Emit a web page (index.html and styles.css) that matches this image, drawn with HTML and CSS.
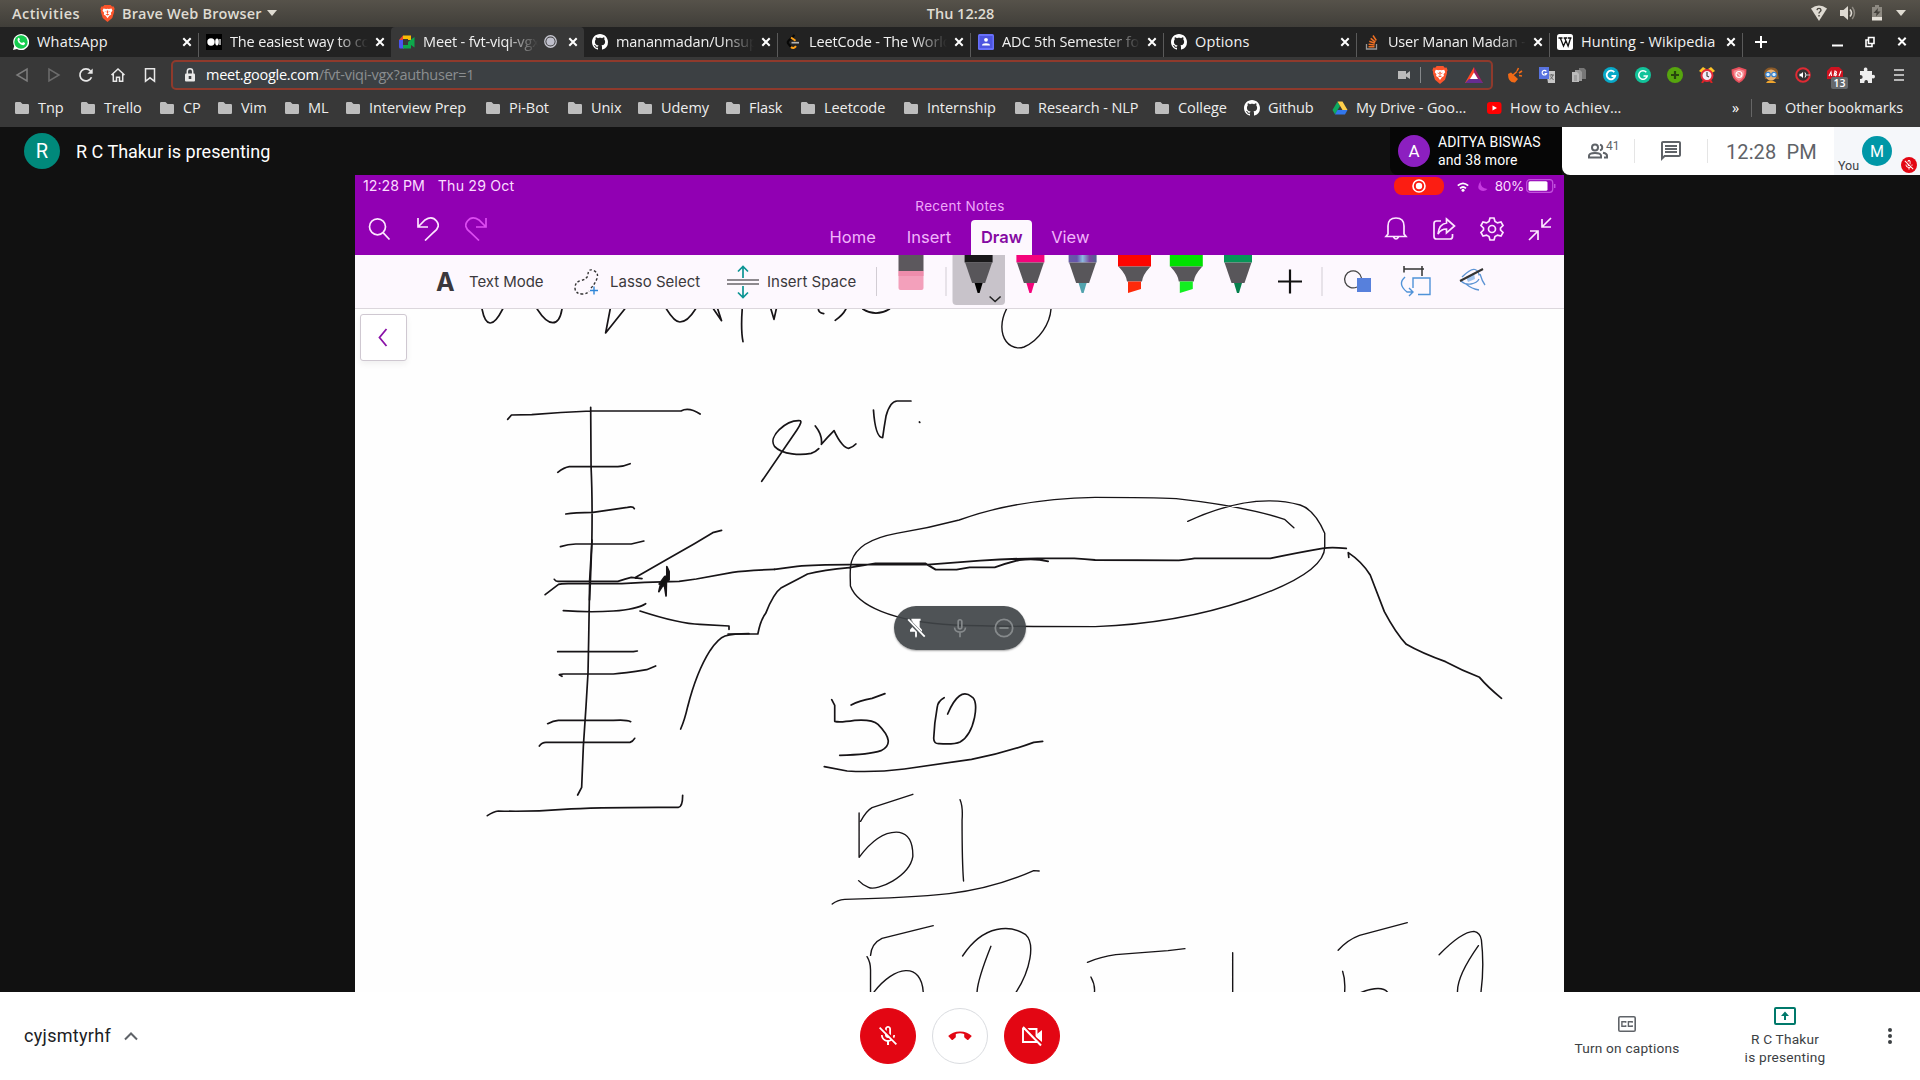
FILE: index.html
```html
<!DOCTYPE html>
<html lang="en">
<head>
<meta charset="utf-8">
<title>Meet - fvt-viqi-vgx</title>
<link rel="stylesheet" href="styles.css">
</head>
<body>
<svg class="defs" width="0" height="0">
  <symbol id="folder" viewBox="0 0 16 16"><path fill="#bdbdbd" d="M1 3.2Q1 2 2.200 2H6.500l2 2h5.300Q15 4 15 5.200v7.600Q15 14 13.800 14H2.200Q1 14 1 12.800z"/></symbol>
  <symbol id="github" viewBox="0 0 16 16"><path fill="#fff" d="M8 0C3.580 0 0 3.580 0 8c0 3.540 2.290 6.530 5.470 7.590.4.070.55-.17.55-.38 0-.19-.01-.82-.01-1.490-2.010.37-2.530-.49-2.690-.94-.09-.23-.48-.94-.82-1.130-.28-.15-.68-.52-.01-.53.63-.01 1.080.58 1.230.82.72 1.210 1.870.87 2.330.66.07-.52.28-.87.51-1.070-1.780-.2-3.640-.89-3.640-3.950 0-.87.31-1.590.82-2.150-.08-.2-.36-1.020.08-2.120 0 0 .67-.21 2.200.82.64-.18 1.320-.27 2-.27s1.360.09 2 .27c1.530-1.040 2.200-.82 2.200-.82.44 1.100.16 1.920.08 2.120.51.56.82 1.270.82 2.150 0 3.070-1.870 3.750-3.650 3.950.29.25.54.73.54 1.480 0 1.070-.01 1.930-.01 2.200 0 .21.15.46.55.38A8 8 0 0 0 16 8c0-4.420-3.580-8-8-8z"/></symbol>
  <symbol id="x" viewBox="0 0 10 10"><path d="M1.300 1.300l7.400 7.400M8.700 1.300L1.300 8.700" stroke="#fff" stroke-width="2" fill="none"/></symbol>
  <symbol id="brave" viewBox="0 0 16 19"><path fill="#fb542b" d="M4.500 0h7L13 1.800l2-.2 1 3-.8 1.700.3 1.200-2.200 7L8 19l-5.300-4.500-2.200-7 .3-1.200L0 4.600l1-3 2 .2z"/><path fill="#fff" d="M3.500 4l3 .6L8 4.200l1.500.4 3-.6 1 2.500-1.800 2.300.5 1.700-2.200 1.500L8 14.800 6 12 3.800 10.500l.5-1.700L2.500 6.500z"/><path fill="#fb542b" d="M4.600 7l2.400.5v1zM11.400 7L9 7.500v1zM7.200 6.200h1.600L8.500 9.500h-1zM5.700 10.500L8 9.900l2.300.6L8 11.800z"/></symbol>
  <symbol id="micoff" viewBox="0 0 24 24"><path fill="#fff" d="M19 11h-1.700c0 .74-.16 1.430-.43 2.050l1.230 1.230c.56-.98.9-2.090.9-3.280zm-4.020.17c0-.06.02-.11.02-.17V5c0-1.660-1.340-3-3-3S9 3.340 9 5v.18l1.800 1.800V5c0-.66.54-1.200 1.200-1.200s1.200.54 1.200 1.200v4.400l1.780 1.770zM4.270 3L3 4.270l6.010 6.010V11c0 1.660 1.330 3 2.990 3 .22 0 .44-.03.65-.08l1.660 1.660c-.71.33-1.500.52-2.310.52-2.760 0-5.300-2.100-5.300-5.100H5c0 3.410 2.720 6.230 6 6.720V21h2v-3.280c.91-.13 1.770-.45 2.540-.9L19.730 21 21 19.730 4.270 3z"/></symbol>
</svg>

<header class="gnome">
  <div class="g-left"><span>Activities</span><svg class="g-brave"><use href="#brave"/></svg><span class="g-app">Brave Web Browser</span><i class="caret"></i></div>
  <div class="g-clock">Thu 12:28</div>
  <div class="g-right">
    <svg width="16" height="16" viewBox="0 0 16 16"><path fill="#dedad2" d="M0 3.500Q8-2.500 16 3.500L8 16z"/><path d="M6 5.200q.2-1.800 2-1.800t2 1.600q0 1-1 1.700t-1 1.800M8 10v1.600" fill="none" stroke="#4a4740" stroke-width="1.400"/></svg>
    <svg width="16" height="16" viewBox="0 0 16 16"><path fill="#dedad2" d="M0 5h3.500L8 1v14l-4.500-4H0z"/><path d="M10 4.500q3 3.500 0 7" stroke="#dedad2" stroke-width="1.600" fill="none"/><path d="M12.200 2q4.500 6 0 12" stroke="#8b877f" stroke-width="1.500" fill="none"/></svg>
    <svg width="12" height="16" viewBox="0 0 12 16"><path fill="#8d8981" d="M1 2h3V0h4v2h3v10H1z"/><path fill="#e6e2da" d="M1 12h10v3.500H1z"/><path fill="#45423c" d="M7 3L2.500 8h3L5 11.500l4.500-5h-3z"/></svg>
    <i class="caret"></i>
  </div>
</header>

<nav class="tabs">
  <div class="tab"><svg class="fav" viewBox="0 0 16 16"><path fill="#fff" d="M0 16l1.200-4A8 8 0 1 1 4 14.900z"/><circle cx="8" cy="8" r="6.700" fill="#16cc4f"/><path fill="#fff" d="M5 4q1-.8 1.500.4l.4 1-.7 1q1 2 2.900 2.700l1-1 2 1q.3 1.600-1.700 2.100Q8 11.300 5.500 8.600 3.600 6 5 4z"/></svg><span>WhatsApp</span><svg class="cl"><use href="#x"/></svg></div>
  <div class="tab sep"><svg class="fav" viewBox="0 0 16 16"><rect width="16" height="16" fill="#000"/><circle cx="5" cy="8" r="3.700" fill="#fff"/><ellipse cx="11" cy="8" rx="1.800" ry="3.400" fill="#fff"/><rect x="13.400" y="5" width="1.200" height="6" fill="#fff"/></svg><span class="fade">The easiest way to code</span><svg class="cl"><use href="#x"/></svg></div>
  <div class="tab active"><svg class="fav" viewBox="0 0 16 16"><path fill="#ea4335" d="M0 6l4-4.500V6z"/><path fill="#fbbc04" d="M4 1.500h8V6H9V5H4z"/><path fill="#4a54f0" d="M0 6h4v5h1v3.500H1.200Q0 14.500 0 13z"/><path fill="#0da84b" d="M4 11h5V8l3-2.500L15.500 3v10.500L12 11v3.500H4z"/></svg><span class="fade">Meet - fvt-viqi-vgx</span><svg class="rec" viewBox="0 0 12 12"><circle cx="6" cy="6" r="5.300" fill="none" stroke="#c8c8d2" stroke-width="1.200"/><circle cx="6" cy="6" r="3.800" fill="#c0c0cc"/></svg><svg class="cl"><use href="#x"/></svg></div>
  <div class="tab"><svg class="fav"><use href="#github"/></svg><span class="fade">mananmadan/Unsupervised</span><svg class="cl"><use href="#x"/></svg></div>
  <div class="tab sep"><svg class="fav" viewBox="0 0 16 16"><path d="M9.500 1L3.500 6.700q-1.600 1.600 0 3.300L6 13" fill="none" stroke="#070706" stroke-width="2"/><path d="M6 3.500l2.500 1.800 2 1.500M6 13q2.500 2.400 5-.8" fill="none" stroke="#ffa116" stroke-width="2"/><path d="M6.500 8.700H14" stroke="#b3b3b3" stroke-width="1.700"/></svg><span class="fade">LeetCode - The World's</span><svg class="cl"><use href="#x"/></svg></div>
  <div class="tab sep"><svg class="fav" viewBox="0 0 16 16"><rect width="16" height="16" rx="1.500" fill="#6870fa"/><rect x="1.500" y="2" width="13" height="12" fill="#4d55e0"/><circle cx="8" cy="5.800" r="1.900" fill="#fff"/><path fill="#fff" d="M4 11.500q0-2.300 4-2.300t4 2.300z"/></svg><span class="fade">ADC 5th Semester for</span><svg class="cl"><use href="#x"/></svg></div>
  <div class="tab sep"><svg class="fav"><use href="#github"/></svg><span class="opt">Options</span><svg class="cl"><use href="#x"/></svg></div>
  <div class="tab sep"><svg class="fav" viewBox="0 0 16 16"><path d="M2.500 10v5h10v-5" fill="none" stroke="#999" stroke-width="1.300"/><path d="M4.500 12.800h6M4.600 10.200l6 .8M5.300 7.300l5.500 2M6.700 4.400l4.700 3.700M9 1.500l3.300 5" stroke="#ef7024" stroke-width="1.500"/></svg><span class="fade tight">User Manan Madan - Stack</span><svg class="cl"><use href="#x"/></svg></div>
  <div class="tab sep"><svg class="fav" viewBox="0 0 16 16"><rect width="16" height="16" rx="2.500" fill="#fff"/><path d="M1.500 4h4M6.700 4h3.600M11 4h3.500M3.300 4l3.200 8L9 6.500M7.700 4l3.400 8L13.600 4" fill="none" stroke="#111" stroke-width="1.300"/></svg><span class="wide">Hunting - Wikipedia</span><svg class="cl"><use href="#x"/></svg></div>
  <div class="newtab sep"><svg width="12" height="12" viewBox="0 0 12 12"><path d="M6 0v12M0 6h12" stroke="#fff" stroke-width="2"/></svg></div>
  <div class="win">
    <svg width="11" height="12" viewBox="0 0 11 12"><path d="M0 9.500h11" stroke="#fff" stroke-width="2"/></svg>
    <svg width="10" height="12" viewBox="0 0 10 12"><path d="M3.500 1.500h5.500v6H3.500zM3 4H1v6.500h6V8" fill="none" stroke="#fff" stroke-width="1.600"/></svg>
    <svg width="10" height="11"><use href="#x"/></svg>
  </div>
</nav>

<div class="toolbar">
  <div class="navs">
    <svg viewBox="0 0 18 18"><path d="M14 3v12L4 9z" fill="none" stroke="#7d7d7d" stroke-width="1.500"/></svg>
    <svg viewBox="0 0 18 18"><path d="M4 3v12l10-6z" fill="none" stroke="#6c6c6c" stroke-width="1.500"/></svg>
    <svg viewBox="0 0 18 18"><path d="M14.500 11.200A6 6 0 1 1 13.500 5" fill="none" stroke="#e8e8e8" stroke-width="1.700"/><path d="M15.700 2.500v5.300h-5.400z" fill="#e8e8e8"/></svg>
    <svg viewBox="0 0 18 18"><path d="M2.500 9L9 3l6.500 6M4.300 8v7.200h3.200v-4h3v4h3.200V8" fill="none" stroke="#e8e8e8" stroke-width="1.500"/></svg>
    <svg viewBox="0 0 18 18"><path d="M4.500 2.700h9v12.600L9 11.800l-4.500 3.500z" fill="none" stroke="#e8e8e8" stroke-width="1.500"/></svg>
  </div>
  <div class="url">
    <svg class="lock" width="12" height="14" viewBox="0 0 12 14"><rect x="1" y="5.500" width="10" height="8" rx="1" fill="#e8e8e8"/><path d="M3.300 6V3.500a2.700 2.700 0 0 1 5.400 0V6" fill="none" stroke="#e8e8e8" stroke-width="1.500"/><rect x="4.700" y="8" width="2.600" height="3" fill="#3c4043"/></svg>
    <span class="addr"><b>meet.google.com</b>/fvt-viqi-vgx?authuser=1</span>
    <svg class="cam" width="12" height="10" viewBox="0 0 12 10"><path fill="#bbb" d="M0 1h8v3l4-3v8L8 6.500V9H0z"/></svg>
    <i class="ubar"></i>
    <svg class="ubr" width="16" height="18"><use href="#brave"/></svg>
    <svg class="bat" width="18" height="16" viewBox="0 0 18 16"><path fill="#9e1f63" d="M9 0l9 16H9z"/><path fill="#ff4724" d="M9 0L0 16h9z"/><path fill="#662d91" d="M0 16l4-4h10l4 4z"/><path fill="#fff" d="M9 5.500L13 12H5z"/></svg>
  </div>
  <div class="exts">
    <svg viewBox="0 0 16 16"><path fill="#f26a16" d="M1 7l3-1.500L11 12l-3 3.500Q1 16 1 7z"/><path d="M6 8l4-3.500M11.500 1L10 4M15 4l-3 2M15 9l-3-.5" stroke="#f26a16" stroke-width="1.600"/></svg>
    <svg viewBox="0 0 16 16"><path fill="#c6c6c6" d="M7 4h9v12H9z"/><rect width="10" height="12" fill="#5873e0"/><path d="M7.300 4.300a2.300 2.300 0 1 0 .3 2.200H5.500" fill="none" stroke="#fff" stroke-width="1.200"/><path d="M10.500 8h4.500M12.700 7v1M14 8q-1 3-3 4.500M11.500 9.500l3 3.500" stroke="#666" fill="none"/></svg>
    <svg viewBox="0 0 16 16"><path fill="#777" d="M8 1h5l2 2v9H8z"/><path fill="#999" d="M4 3h5l2 2v9H4z"/><path fill="#bbb" d="M1 5h5l2 2v8H1z"/><path d="M3 9h3M3 11h3M3 13h3" stroke="#888"/></svg>
    <svg viewBox="0 0 16 16"><circle cx="8" cy="8" r="8" fill="#08a9c8"/><path d="M11.300 5.200A4.300 4.300 0 1 0 12.200 9H8.500" fill="none" stroke="#fff" stroke-width="1.800"/></svg>
    <svg viewBox="0 0 16 16"><circle cx="8" cy="8" r="8" fill="#12c39a"/><path d="M11.300 5.200A4.300 4.300 0 1 0 12.200 9H8.500" fill="none" stroke="#fff" stroke-width="1.500"/></svg>
    <svg viewBox="0 0 16 16"><circle cx="8" cy="8" r="8" fill="#56a50e"/><path d="M8 4v8M4 8h8" stroke="#27460d" stroke-width="2.200"/></svg>
    <svg viewBox="0 0 16 16"><path fill="#ffc526" d="M0 4L4 0l3 2-4 4zM16 4l-4-4-3 2 4 4z"/><path d="M3 16l2-3M13 16l-2-3" stroke="#d22" stroke-width="2"/><circle cx="8" cy="8.500" r="5.500" fill="#f4ecf7" stroke="#e32938" stroke-width="2"/><path d="M8 5v4l2 1" fill="none" stroke="#444" stroke-width="1.200"/></svg>
    <svg viewBox="0 0 16 16"><path fill="#e94f5c" d="M8 0l7.500 2.500Q16 12 8 16 0 12 .5 2.500z"/><path fill="#f58b92" d="M8 2l5.500 1.800Q14 11 8 14 2 11 2.500 3.800z"/><circle cx="8" cy="7.500" r="3" fill="none" stroke="#fff" stroke-width="1.200"/><path d="M6 5.500l4 4" stroke="#fff"/></svg>
    <svg viewBox="0 0 16 16"><path fill="#8a5a28" d="M1 6q1-6 8-5.500T15 7l1 5H2z"/><circle cx="8" cy="8" r="5.500" fill="#e8b274"/><circle cx="5" cy="7.500" r="2.300" fill="#d9f0ff" stroke="#2b7bd0" stroke-width="1.100"/><circle cx="11" cy="7.500" r="2.300" fill="#d9f0ff" stroke="#2b7bd0" stroke-width="1.100"/><path fill="#f0a52c" d="M3 16q1-3 5-2.500t5 2.500z"/></svg>
    <svg viewBox="0 0 16 16"><circle cx="8" cy="8" r="6.800" fill="#333" stroke="#df2a33" stroke-width="2"/><path fill="#fff" d="M4.500 6.800h1.500L8 5v6L6 9.300H4.500z"/><path d="M10 5.500q2 2.500 0 5" fill="none" stroke="#fff"/><path d="M11 8h4" stroke="#bbb"/></svg>
    <span class="adb"><svg viewBox="0 0 16 16"><path fill="#cf1220" d="M4 0h8l4 4v8H0V4z"/><path d="M2 9l2-4 .5 4M7 9l1-5q3 1 0 3 3 0 0 2M12 9l2-5" fill="none" stroke="#fff" stroke-width="1.100"/></svg><em>13</em></span>
    <svg viewBox="0 0 16 16"><path fill="#eee" d="M1 4h4q-.8-3.500 1.600-3.500T8.300 4H13v4q3-.8 3 1.600T13 11.300V16H9q.2-3-1.800-3T5.300 16H1v-4q2.700.2 2.700-1.900T1 8z"/></svg>
    <svg viewBox="0 0 16 16"><path d="M3 3h10M3 8h10M3 13h10" stroke="#e0e0e0" stroke-width="1.500"/></svg>
  </div>
</div>

<div class="bookmarks">
  <div><svg><use href="#folder"/></svg>Tnp</div><div><svg><use href="#folder"/></svg>Trello</div><div><svg><use href="#folder"/></svg>CP</div><div><svg><use href="#folder"/></svg>Vim</div><div><svg><use href="#folder"/></svg>ML</div><div><svg><use href="#folder"/></svg>Interview Prep</div><div><svg><use href="#folder"/></svg>Pi-Bot</div><div><svg><use href="#folder"/></svg>Unix</div><div><svg><use href="#folder"/></svg>Udemy</div><div><svg><use href="#folder"/></svg>Flask</div><div><svg><use href="#folder"/></svg>Leetcode</div><div><svg><use href="#folder"/></svg>Internship</div><div><svg><use href="#folder"/></svg>Research - NLP</div><div><svg><use href="#folder"/></svg>College</div><div><svg><use href="#github"/></svg>Github</div>
  <div><svg viewBox="0 0 16 16"><path fill="#0da960" d="M5.500 1.500L8 6l-5 8.500L.5 10z"/><path fill="#ffcf4a" d="M5.500 1.500h5l5 8.500h-5z"/><path fill="#3277ed" d="M5.500 10h10L13 14.500H3z"/></svg>My Drive - Goo…</div>
  <div class="yt"><svg viewBox="0 0 16 16"><rect x="1" y="2" width="14.500" height="12" rx="3" fill="#f00"/><path fill="#fff" d="M6.500 5.500L11 8l-4.500 2.500z"/></svg>How to Achiev…</div>
  <div class="more">»</div>
  <div class="other"><svg><use href="#folder"/></svg>Other bookmarks</div>
</div>

<main class="meet">
  <div class="meethead">
    <i class="av av-r">R</i><span class="who">R C Thakur is presenting</span>
    <div class="others"><i class="av av-a">A</i><p>ADITYA BISWAS<br>and 38 more</p></div>
    <div class="panel">
      <div class="people"><svg width="24" height="24" viewBox="0 0 24 24"><g fill="none" stroke="#5f6368" stroke-width="2"><circle cx="9" cy="8.500" r="3"/><path d="M3 18.500v-1.700q0-2.800 6-2.800t6 2.800v1.700z"/><path d="M14 5.600a3 3 0 0 1 0 5.800M17 13.800q4 .8 4 3v1.700h-3"/></g></svg><sup>41</sup></div>
      <div class="chat"><svg width="24" height="24" viewBox="0 0 24 24"><path fill="#5f6368" d="M4 4h16v12H5.170L4 17.170V4m0-2c-1.100 0-1.990.9-1.990 2L2 22l4-4h14c1.100 0 2-.9 2-2V4c0-1.100-.9-2-2-2H4zm2 10h12v2H6v-2zm0-3h12v2H6V9zm0-3h12v2H6V6z"/></svg></div>
      <div class="time">12:28&nbsp; PM</div>
      <div class="you"><span>You</span><i class="av av-m">M</i><i class="mute"><svg width="12" height="12"><use href="#micoff"/></svg></i></div>
    </div>
  </div>

  <section class="share">
    <div class="ipad">
      <div class="status"><span>12:28 PM</span><span class="date">Thu 29 Oct</span>
        <i class="recpill"><svg width="14" height="14" viewBox="0 0 14 14"><circle cx="7" cy="7" r="6" fill="none" stroke="#fff" stroke-width="1.600"/><circle cx="7" cy="7" r="3.200" fill="#fff"/></svg></i>
        <svg class="wifi" width="12" height="10" viewBox="0 0 12 10"><path d="M.8 3.700q5.200-4.700 10.400 0M3 6.300q3-2.700 6 0" fill="none" stroke="#fff" stroke-width="1.800"/><circle cx="6" cy="8.300" r="1.500" fill="#fff"/></svg>
        <svg class="moon" width="10" height="12" viewBox="0 0 10 12"><path fill="#c63be0" d="M3 .5Q1 7.500 9.500 9 6 12.500 2 10T3 .5z"/></svg>
        <span>80%</span>
        <svg class="batt" width="30" height="14" viewBox="0 0 30 14"><rect x=".7" y=".7" width="26" height="12.600" rx="3" fill="none" stroke="#c252dd" stroke-width="1.200"/><rect x="2.500" y="2.300" width="19" height="9.400" rx="1.500" fill="#fff"/><path d="M28.700 5v4" stroke="#c252dd" stroke-width="1.500"/></svg>
      </div>
      <div class="ribbon">
        <div class="r-left">
          <svg width="23" height="24" viewBox="0 0 23 24"><circle cx="9.500" cy="9.800" r="8" /><path d="M15.300 15.800l6.200 6.700"/></svg>
          <svg width="22" height="24" viewBox="0 0 22 24"><path d="M1 1v9h10M1 10L8 3Q15-1.500 19.500 4T17 15l-9 8.500"/></svg>
          <svg class="dim" width="22" height="24" viewBox="0 0 22 24"><path d="M21 1v9H11M21 10l-7-7Q7-1.500 2.500 4T5 15l9 8.500"/></svg>
        </div>
        <div class="r-mid"><div class="recent">Recent Notes</div><div class="rtabs"><span>Home</span><span>Insert</span><span class="on">Draw</span><span>View</span></div></div>
        <div class="r-right">
          <svg width="24" height="24" viewBox="0 0 24 24"><path d="M4 17V9q0-8 8-8t8 8v8l2 2.500H2zM9.500 20q2.500 4 5 0"/></svg>
          <svg width="24" height="24" viewBox="0 0 24 24"><path d="M9 4H4.500Q2 4 2 6.500v13Q2 22 4.500 22H18q2.500 0 2.500-2.500V17M14.500 2l8 7-8 7v-4Q9 12 6 17q1-10 8.500-11z"/></svg>
          <svg width="24" height="24" viewBox="0 0 24 24"><path d="M10 1h4l1 3.500 2.500 1.400 3.500-1 2 3.600-2.500 2.500v2L23 15.500l-2 3.600-3.500-1-2.500 1.400-1 3.500h-4l-1-3.500-2.500-1.400-3.500 1-2-3.600L3.500 13v-2L1 8.500l2-3.600 3.500 1L9 4.500z"/><circle cx="12" cy="12" r="3.500"/></svg>
          <svg width="24" height="24" viewBox="0 0 24 24"><path d="M23 1l-9 9M14 2v8h9M1 23l9-9M2 14h8v9"/></svg>
        </div>
      </div>
    </div>
    <div class="draw">
      <b class="bigA">A</b><span class="tm">Text Mode</span>
      <svg class="lasso" width="26" height="26" viewBox="0 0 26 26"><path d="M17 19q4-4 6-9.500T19.500 1.500 14 6Q13 10 7 11.500T1 19t8 6q5-.5 6-3" fill="none" stroke="#333" stroke-width="1.400" stroke-dasharray="2.500 2"/><path d="M20 17.500v8M16 21.500h8" stroke="#2f86d8" stroke-width="1.400"/></svg>
      <span class="ls">Lasso Select</span>
      <svg class="insp" width="34" height="34" viewBox="0 0 34 34"><path d="M1 15h32M1 19h32" stroke="#6a666b" stroke-width="1.700"/><path d="M17 13V2M12 6.500L17 1.500l5 5M17 21v11M12 27.500l5 5 5-5" fill="none" stroke="#0c9494" stroke-width="1.700"/></svg>
      <span class="is">Insert Space</span>
      <!-- drawing tools -->
      <svg class="pens" width="620" height="53" viewBox="872 255 620 53">
        <defs>
          <g id="nib"><path fill="#58565a" d="M-13.500 7.500h27L6.500 28h-13z"/></g>
          <g id="mark"><path fill="#58565a" d="M-16 11.500h32Q8 20 7.500 26.500h-15Q-8 20-16 11.500z"/></g>
          <linearGradient id="gal"><stop offset="0" stop-color="#665ca5"/><stop offset=".3" stop-color="#6654ac"/><stop offset=".5" stop-color="#8cbbdf"/><stop offset=".75" stop-color="#7848a0"/><stop offset="1" stop-color="#4f638f"/></linearGradient>
        </defs>
        <path d="M876.500 267v29M946 267v29M1322 267v29" stroke="#d2cdd4"/>
        <path fill="#5c585d" d="M898.500 255h25v16h-25z"/><path fill="#f3a0bb" d="M898.500 271h25v17q0 2-2 2h-21q-2 0-2-2z"/><path fill="#ee8dac" d="M898.500 271h25v5h-25z"/>
        <path fill="#c8c3ca" d="M952.500 255H1005v46q0 4-4 4h-44.500q-4 0-4-4z"/>
        <g transform="translate(978.600 255)"><path fill="#19181a" d="M-14 0h28v7.500h-28z"/><use href="#nib"/><path d="M-4 28h8L1 38h-2z"/><path d="M11 41.500l5.500 5 5.500-5" fill="none" stroke="#222" stroke-width="1.600"/></g>
        <g transform="translate(1030.400 255)"><path fill="#f4047c" d="M-14 0h28v7.500h-28z"/><use href="#nib"/><path fill="#f4047c" d="M-4 28h8L1 38h-2z"/></g>
        <g transform="translate(1082.600 255)"><path fill="url(#gal)" d="M-14 0h28v7.500h-28z"/><use href="#nib"/><path fill="#52a3ae" d="M-4 28h8L1 38h-2z"/></g>
        <g transform="translate(1134.500 255)"><path fill="#fd0500" d="M-16.500 0h33v11.500h-33z"/><use href="#mark"/><path fill="#fd2a0a" d="M-6.500 26.500h13V34l-13 4z"/></g>
        <g transform="translate(1186.300 255)"><path fill="#00e000" d="M-16.500 0h33v11.500h-33z"/><use href="#mark"/><path fill="#12ef20" d="M-6.500 26.500h13V34l-13 4z"/></g>
        <g transform="translate(1238 255)"><path fill="#079458" d="M-14 0h28v7.500h-28z"/><use href="#nib"/><path fill="#06804d" d="M-4 28h8L1 38h-2z"/></g>
        <path d="M1290 269.500v24M1278 281.500h24" stroke="#111" stroke-width="2.200"/>
        <path d="M1357 287a8.500 8.500 0 1 1 4.500-9" fill="none" stroke="#444" stroke-width="1.300"/><path fill="#5780dc" d="M1357 278h14v14h-14z"/>
        <path d="M1404 269h20M1404 266v6.500M1422 266v10" stroke="#333" stroke-width="1.500"/><path d="M1418 294.500h12V278h-17v10M1405 277q-8 7 2 15h6M1409 288l4 4-4 4" fill="none" stroke="#4f92d8" stroke-width="1.400"/>
        <path d="M1462 277q9-9 13-7.500t4 6M1461 281q4 4 10 3t8-5M1466 284q6 5 13 6M1480 274q2 7 5 11" fill="none" stroke="#5b93d4" stroke-width="1.300"/><path fill="#9fc3ee" d="M1466 277l8-4 1 6-7 3z"/><path d="M1460 281l23-12" stroke="#333" stroke-width="2"/>
      </svg>
    </div>
    <div class="page">
      <svg class="ink" width="1209" height="683" viewBox="355 309 1209 683">
        <path class="thin" d="M1006.500 309C1002 318 1001 328 1003 335 1006 345 1015 350 1024 347 1040 340 1050 323 1051 309"/>
        <g transform="translate(350 300) scale(.38265 .33333)">
          <path d="M345 27Q352 68 366 69T399 27M489 27Q512 68 530 68T554 27M680 27L668 99 718 27M827 27Q848 66 862 66 882 66 903 27M950 27L971 62 961 27M1025 27Q1021 90 1027 125M1100 27L1108 58 1114 27M1224 27Q1224 38 1238 41M1296 27Q1288 45 1268 61M1340 27Q1374 52 1410 27"/>
          <path d="M412 358L422 345 475 344Q550 336 630 333H865Q885 320 915 342M629 322L630 500Q634 600 632 730L628 850 626 900M543 517Q560 502 573 500H700Q715 499 732 491M564 642Q585 637 635 637L725 622Q740 618 743 626M550 740Q570 733 590 732H735L768 723"/>
          <path d="M1076 544Q1120 470 1168 390 1184 362 1175 362C1140 360 1090 410 1110 440 1130 465 1180 466 1205 460Q1218 455 1225 446M1216 378Q1235 405 1232 433 1245 415 1265 392C1280 430 1295 445 1303 445Q1315 441 1322 432M1368 330Q1373 413 1392 413 1396 380 1401 347 1412 303 1430 303H1466M1488 366l1 1"/>
          <path d="M534 838Q537 844 543 844H700Q720 836 735 832L763 836M745 834L748 831 830 777 900 731 948 698 971 691M510 884L545 853Q550 851 570 851H710L770 847 860 844 905 837 1000 817Q1030 812 1110 808"/>
          <path fill="#111" d="M828 800L834 815V840L827 842 826 888 822 858 818 856 807 875 812 850 808 852 822 830 828 828z"/>
        </g>
        <g transform="translate(350 540) scale(.33333)">
          <path d="M726 0L719 120 716 300Q716 400 708 500L700 620 695 742 683 765M640 212Q720 218 790 213T887 191M870 213Q990 252 1050 253L1137 258V268M623 335H850L862 333M636 409L628 404 640 402H790Q820 400 890 389L917 378M593 551Q610 542 625 541H790Q830 538 842 545M568 618Q576 607 588 607H840Q848 605 854 595M412 827Q430 815 445 813 540 816 640 808 740 801 985 802 998 801 998 766M992 567Q1004 540 1013 500 1040 395 1080 332 1105 295 1125 288 1150 281 1197 281"/>
        </g>
        <g transform="translate(750 470) scale(.52296 .33333)">
          <path class="thin" d="M1040 173L1022 148Q950 110 815 86 770 82 660 82 510 87 400 150 340 175 280 190 205 212 194 275C190 300 192 320 192 348 205 405 270 455 390 465Q470 470 660 470 820 460 950 390 1100 310 1099 230L1099 190Q1080 120 1052 105 960 65 837 154"/>
          <path class="bold" d="M47 298L90 289Q130 283 210 284H340L440 272Q500 266 550 265H620Q640 267 660 270L820 271Q840 268 850 265H995Q1050 247 1095 235 1110 231 1140 235M190 293L240 280H335L355 299 395 299 420 292H468Q490 280 515 270 545 264 570 274"/>
          <path d="M-42 492H15Q20 450 30 430 45 370 60 353 95 325 110 312 140 300 190 293M1145 262L1144 248Q1170 275 1186 315L1213 425Q1235 490 1255 523 1285 550 1330 575 1360 600 1395 622 1410 650 1437 685"/>
        </g>
        <g transform="translate(780 680) scale(.49745 .33333)">
          <path d="M104 59L110 76V124Q120 128 150 121 185 117 197 133 235 190 203 212 180 224 120 226M143 75Q160 61 185 55L211 41M330 53Q317 64 316 82 310 130 309 175 309 192 320 191 350 194 362 186C392 160 402 60 385 50Q360 20 337 102M89 260L135 273Q190 278 250 267L385 238Q450 220 510 187L528 184"/>
          <path class="thin" d="M159 399V532Q200 450 240 457 268 465 267 530C260 590 195 635 178 622Q165 614 158 602M162 424Q174 392 185 383L267 343M362 359Q368 380 366 420 366 550 369 603M105 672Q115 660 130 658 260 654 340 641 430 625 510 572L521 573"/>
          <path class="thin" d="M175 830Q182 847 182 870V938M182 826Q184 790 205 775L308 737M188 938C230 855 285 845 288 938M367 828C410 730 465 735 494 764 513 790 504 870 474 938M424 799Q397 900 396 938M618 847Q645 830 675 824L780 812 814 806M625 891Q634 915 632 938M910 818V938M1122 811Q1140 780 1165 766L1261 728M1131 874Q1137 900 1135 938M1167 938Q1210 913 1222 938M1325 824Q1370 755 1395 754 1408 758 1410 780 1416 860 1409 938M1404 797Q1360 890 1362 938"/>
        </g>
      </svg>
      <div class="back"><svg width="10" height="19" viewBox="0 0 10 19"><path d="M8.500 1L1.500 9.500l7 8.500" fill="none" stroke="#8a12a8" stroke-width="1.800"/></svg></div>
      <div class="pill">
        <svg viewBox="0 0 24 24"><path fill="#fff" d="M7 2h10v2h-1v7l2.500 3v2H5.500v-2L8 11V4H7zM11 16h2v5l-1 2-1-2z"/><path d="M2.500 2.500l18.500 19" stroke="#4d5255" stroke-width="4"/><path d="M3.500 2.500l18 19" stroke="#fff" stroke-width="2"/></svg>
        <svg viewBox="0 0 24 24"><path d="M12 3a2 2 0 0 0-2 2v6a2 2 0 0 0 4 0V5a2 2 0 0 0-2-2zM6 11.500q.5 5 6 5t6-5M12 16.500V22" fill="none" stroke="#868a8c" stroke-width="1.800"/></svg>
        <svg viewBox="0 0 24 24"><circle cx="12" cy="12" r="9.500" fill="none" stroke="#868a8c" stroke-width="1.900"/><path d="M7 12h10" stroke="#868a8c" stroke-width="1.900"/></svg>
      </div>
    </div>
  </section>
</main>

<footer class="foot">
  <div class="code">cyjsmtyrhf<svg width="14" height="10" viewBox="0 0 14 10"><path d="M1 8.500l6-6 6 6" fill="none" stroke="#5f6368" stroke-width="2"/></svg></div>
  <div class="btns">
    <i class="btn red"><svg width="24" height="24"><use href="#micoff"/></svg></i>
    <i class="btn"><svg width="24" height="24" viewBox="0 0 24 24"><path fill="#e30613" d="M12 7.500C7 7.500 2.800 9.300.2 12l3.400 3.700q.6.600 1.300 0l2.400-1.900q.5-.4.5-1V9.900q4.200-1.100 8.400 0v2.900q0 .6.500 1l2.400 1.900q.7.600 1.300 0l3.400-3.700C21.200 9.300 17 7.500 12 7.500z"/></svg></i>
    <i class="btn red"><svg width="24" height="24" viewBox="0 0 24 24"><path d="M3 5v13h13.500V5z" fill="none" stroke="#fff" stroke-width="1.900"/><path d="M17 10l5-4v12l-5-4z" fill="#fff"/><path d="M5 3l17 17.500" stroke="#e30613" stroke-width="2"/><path d="M3 3l18 18.500" stroke="#fff" stroke-width="2"/></svg></i>
  </div>
  <div class="acts">
    <div class="cc"><svg width="18" height="16" viewBox="0 0 18 16"><rect x=".8" y=".8" width="16.400" height="14.400" rx="1.300" fill="none" stroke="#5f6368" stroke-width="1.600"/><path d="M7.700 6.700V5.700H3.900v4.600h3.800v-1M14.200 6.700V5.700h-3.800v4.600h3.800v-1" fill="none" stroke="#5f6368" stroke-width="1.400"/></svg><span>Turn on captions</span></div>
    <div class="pr"><svg width="22" height="18" viewBox="0 0 22 18"><rect x="1" y="1" width="20" height="16" rx="1" fill="none" stroke="#00796b" stroke-width="2"/><path fill="#00796b" d="M11 4.500l4 4.500h-3v4h-2V9H7z"/></svg><span>R C Thakur<br>is presenting</span></div>
    <svg class="dots" width="4" height="16" viewBox="0 0 4 16"><circle cx="2" cy="2" r="2"/><circle cx="2" cy="8" r="2"/><circle cx="2" cy="14" r="2"/></svg>
  </div>
</footer>
</body>
</html>
```
FILE: styles.css
```css
* { box-sizing: border-box; }
body { margin: 0; width: 1920px; height: 1080px; overflow: hidden; display: flex; flex-direction: column; background: #111; font-family: "Open Sans", "Noto Sans", sans-serif; }
svg { display: block; flex: none; }
i, em { font-style: normal; }
.defs { position: absolute; }

.gnome { height: 27px; flex: none; background: linear-gradient(#56524a, #403e39); color: #dfdbd2; font-size: 14.500px; font-weight: 600; display: grid; grid-template-columns: 1fr auto 1fr; align-items: center; padding: 0 14px 1px 12px; }
.g-left { display: flex; align-items: center; }
.g-left span:first-child { width: 68px; letter-spacing: .45px; white-space: nowrap; }
.g-brave { width: 15px; height: 17px; margin: 0 7px 0 20px; }
.g-app { letter-spacing: .15px; }
.g-clock { padding-left: 3px; }
.caret { width: 0; height: 0; border: 5px solid transparent; border-top: 6px solid #dfdbd2; border-bottom: 0; }
.g-app + .caret { margin-left: 5px; }
.g-right { display: flex; justify-content: flex-end; align-items: center; gap: 13px; }
.g-right svg:nth-child(2) { margin-right: 2px; }

.tabs { height: 30px; flex: none; background: #222; display: flex; padding-left: 5px; color: #f1f1f1; font-size: 14.500px; }
.tab { width: 193px; height: 30px; display: flex; align-items: center; padding: 0 6px 1px 7px; border-left: 1px solid transparent; white-space: nowrap; }
.sep { border-image: linear-gradient(transparent 7px, #5a5a5a 7px) 1; border-left: 1px solid; }
.active { background: #383838; border-radius: 4px 4px 0 0; }
.fav { width: 16px; height: 16px; margin-right: 8px; }
.tab span { flex: 1; overflow: hidden; letter-spacing: -.15px; }
.tab:first-child span { letter-spacing: .2px; }
.tab .wide { letter-spacing: .12px; }
.tab .opt { letter-spacing: .15px; }
.tab .tight { letter-spacing: -.2px; }
.fade { -webkit-mask-image: linear-gradient(90deg, #000 calc(100% - 32px), transparent); mask-image: linear-gradient(90deg, #000 calc(100% - 32px), transparent); }
.cl { width: 10px; height: 10px; margin-left: 7px; }
.rec { width: 13px; height: 13px; margin: 0 4px 0 6px; }
.newtab { width: 40px; display: flex; align-items: center; padding: 0 0 1px 12px; }
.win { margin-left: auto; display: flex; align-items: center; gap: 22px; padding: 0 13px 1px 0; }

.toolbar { height: 36px; flex: none; background: #383838; display: flex; align-items: center; }
.navs { display: flex; gap: 14px; padding-left: 13px; width: 171px; flex: none; }
.navs svg { width: 18px; height: 18px; }
.url { width: 1322px; height: 30px; border: 2px solid #8f3a2c; border-radius: 5px; background: #3c4043; display: flex; align-items: center; padding: 0 8px 0 11px; }
.addr { flex: 1; margin: -1px 0 0 10px; font-size: 14.500px; color: #8b8e90; letter-spacing: -.26px; }
.addr b { font-weight: 400; color: #fff; }
.ubar { width: 1px; height: 16px; background: #85888a; margin: 0 11px 0 10px; }
.bat { margin-left: 17px; }
.exts { display: flex; gap: 16px; padding-left: 14px; align-items: center; }
.exts svg { width: 16px; height: 16px; }
.adb { position: relative; }
.adb em { position: absolute; left: 4px; top: 10px; width: 17px; height: 12px; background: #65696c; color: #fff; font-size: 10.500px; font-weight: 600; line-height: 12px; text-align: center; border-radius: 2px; }

.bookmarks { height: 34px; flex: none; background: #383838; color: #eee; font-size: 14.500px; white-space: nowrap; display: grid; grid-template-columns: 66px 79px 58px 67px 61px 140px 82px 70px 88px 75px 103px 111px 140px 90px 88px 154px 246px 19px 1fr; padding: 0 0 5px 14px; align-items: center; letter-spacing: -.06px; }
.bookmarks div { display: flex; align-items: center; height: 18px; }
.bookmarks svg { width: 16px; height: 16px; margin-right: 8px; }
.bookmarks .yt { letter-spacing: .3px; }
.bookmarks .more { color: #fff; }
.bookmarks .other { border-left: 1px solid #666; padding-left: 9px; }

.meet { height: 865px; flex: none; background: #111; }
.meethead { height: 48px; display: flex; align-items: center; font-family: Roboto, sans-serif; color: #fff; padding-left: 24px; }
.av { border-radius: 50%; display: flex; align-items: center; justify-content: center; color: #fff; flex: none; }
.av-r { width: 36px; height: 36px; background: #00897b; font-size: 20px; }
.who { margin-left: 16px; font-size: 18px; }
.others { margin-left: auto; width: 172px; height: 48px; background: #060606; border-radius: 0 0 0 8px; display: flex; align-items: center; padding-left: 8px; }
.av-a { width: 32px; height: 32px; background: #8c1fc0; font-size: 17px; }
.others p { margin: -1px 0 0 8px; font-size: 14px; line-height: 18px; letter-spacing: .12px; white-space: nowrap; }
.panel { width: 358px; height: 48px; background: #fff; border-radius: 0 0 0 8px; display: flex; align-items: center; color: #5f6368; }
.people { width: 73px; height: 24px; padding-left: 24px; border-right: 1px solid #e5e5e5; display: flex; align-items: center; }
.people svg { width: 24px; margin-right: -4px; }
.people sup { font-size: 12px; line-height: 12px; margin-bottom: 11px; font-weight: 400; }
.chat { width: 73px; height: 24px; padding-left: 24px; border-right: 1px solid #e5e5e5; }
.time { width: 126px; padding: 1px 0 0 18px; font-size: 20px; letter-spacing: .1px; white-space: nowrap; }
.you { flex: 1; height: 48px; background: #f5f7fa; position: relative; padding-left: 28px; display: flex; align-items: center; }
.you span { position: absolute; left: 4px; bottom: 2px; font-size: 12.500px; color: #3c4043; }
.av-m { width: 30px; height: 30px; background: #0097a7; font-size: 16px; }
.mute { position: absolute; right: 3px; bottom: 2px; width: 16px; height: 16px; border-radius: 50%; background: #e30613; display: flex; align-items: center; justify-content: center; }

.share { width: 1209px; height: 817px; margin-left: 355px; background: #fefefe; font-family: Inter, sans-serif; }
.ipad { height: 80px; background: #9100b3; color: #fbdcff; }
.status { height: 21px; padding: 0 8px; display: flex; align-items: center; font-size: 14.200px; }
.date { margin-left: 13px; letter-spacing: .15px; }
.recpill { width: 50px; height: 18px; border-radius: 8px; background: #fc1d12; margin-left: auto; display: flex; align-items: center; justify-content: center; }
.wifi { margin: 2px 9px 0 13px; }
.moon { margin-right: 7px; }
.status span:nth-of-type(3) { font-size: 13.500px; letter-spacing: -.3px; }
.batt { margin: 0 0 0 2px; }
.ribbon { height: 59px; display: grid; grid-template-columns: 1fr auto 1fr; }
.ribbon svg { fill: none; stroke: #fde6ff; stroke-width: 1.700; }
.r-left { display: flex; gap: 26px; padding: 21px 0 0 13px; }
.r-left svg.dim { stroke: #dd4cf2; }
.r-mid { text-align: center; }
.recent { font-size: 13.500px; height: 24px; line-height: 20px; letter-spacing: .3px; color: #efa8fa; padding-left: 1px; }
.rtabs { display: flex; font-size: 16.500px; line-height: 35px; color: #f2b4fb; }
.rtabs span { padding-right: 31px; }
.rtabs span:nth-child(2) { padding-right: 20px; }
.rtabs span:last-child { padding: 0 0 0 19px; }
.rtabs span.on { background: #fdf8fe; color: #850aa3; font-weight: 600; width: 61px; padding: 0; border-radius: 4px 4px 0 0; }
.r-right { display: flex; gap: 24px; justify-content: flex-end; padding: 21px 12px 0 0; }

.draw { height: 54px; background: #fdf8fe; border-bottom: 1px solid #dcd7dd; color: #3b383c; display: flex; align-items: center; font-size: 15px; padding-left: 81px; white-space: nowrap; }
.bigA { font-size: 25px; width: 33px; font-weight: 700; }
.tm { width: 105px; letter-spacing: -.05px; }
.lasso { margin-right: 10px; }
.ls { width: 117px; }
.insp { margin-right: 7px; margin-left: -1px; }
.is { width: 105px; }
.pens { align-self: flex-start; }

.page { height: 683px; position: relative; background: #fefefe; }
.ink { fill: none; stroke: #171417; stroke-width: 1.700; stroke-linecap: round; stroke-linejoin: round; }
.ink path { vector-effect: non-scaling-stroke; }
.ink .bold { stroke-width: 1.900; }
.ink .thin { stroke-width: 1.400; }
.back { position: absolute; left: 5px; top: 5px; width: 47px; height: 47px; border: 1px solid #cfc8d1; border-radius: 3px; background: #fff; box-shadow: 0 3px 6px #0000000f; display: flex; align-items: center; justify-content: center; padding-right: 2px; }
.pill { position: absolute; left: 539px; top: 297px; width: 132px; height: 44px; border-radius: 22px; background: #3f4447ea; box-shadow: 0 1px 2px #0005; display: flex; align-items: center; justify-content: space-around; }
.pill svg { width: 22px; height: 22px; }

.foot { height: 88px; flex: none; background: #fff; display: grid; grid-template-columns: 1fr auto 1fr; align-items: center; font-family: Roboto, sans-serif; color: #3c4043; padding-left: 24px; padding-right: 24px; }
.code { font-size: 18px; display: flex; align-items: center; color: #202124; letter-spacing: .3px; padding-bottom: 1px; }
.code svg { margin-left: 13px; }
.btns { display: flex; gap: 16px; }
.btn { width: 56px; height: 56px; border: 1px solid #dadce0; border-radius: 50%; display: flex; align-items: center; justify-content: center; background: #fff; }
.btn.red { background: #e30613; border-color: #e30613; }
.acts { display: flex; justify-content: flex-end; align-items: center; font-size: 13.700px; line-height: 18px; font-weight: 400; text-align: center; letter-spacing: .2px; }
.cc, .pr { display: flex; flex-direction: column; align-items: center; }
.cc { width: 116px; gap: 7px; }
.pr { width: 120px; gap: 5px; margin: 0 43px 0 40px; }
.dots { fill: #3c4043; margin-right: 4px; }
```
